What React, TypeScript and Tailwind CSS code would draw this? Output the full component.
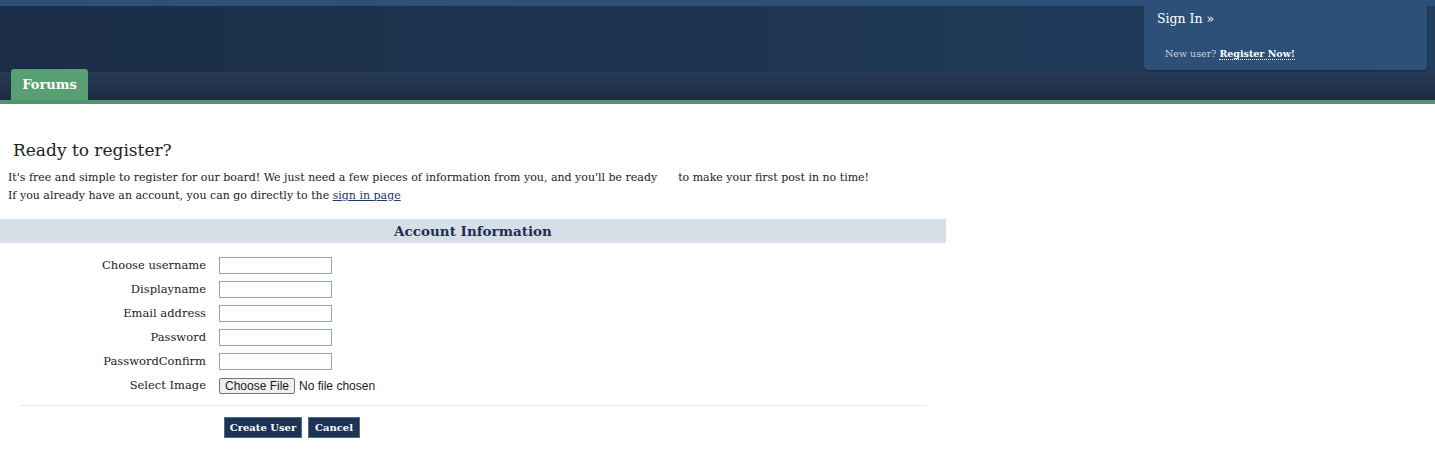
export default function App() {
  const fields = [
    "Choose username",
    "Displayname",
    "Email address",
    "Password",
    "PasswordConfirm",
  ];

  return (
    <div className="min-h-[450px] bg-white font-['DejaVu_Serif',serif] text-[#1b1b1b]">
      {/* header */}
      <header className="relative">
        <div className="h-[6px] bg-[#2d5078]" />
        <div className="h-[66px] bg-gradient-to-r from-[#1b2d46] to-[#203d5e]" />
        <nav className="h-[28px] bg-gradient-to-b from-[#283a55] to-[#1c2b42] px-[11px] flex items-end">
          <a className="flex h-[31px] w-[77px] items-center justify-center rounded-t-[3px] bg-[#58a073] text-[13px] font-bold text-white">
            Forums
          </a>
        </nav>
        <div className="h-[4px] bg-[#559270]" />

        <div className="absolute right-[8px] top-[6px] h-[64px] w-[283px] rounded-b-[4px] bg-[#2c5077] shadow-[0_1px_2px_rgba(0,0,0,0.3)]">
          <div className="pl-[13px] pt-[4px] text-[12.5px] text-white">Sign In »</div>
          <div className="pl-[21px] pt-[18px] text-[9.5px] text-[#c9d4e2]">
            New user?{" "}
            <a className="font-bold text-white border-b border-dotted border-white">Register Now!</a>
          </div>
        </div>
      </header>

      {/* content */}
      <main className="pt-[34px]">
        <h1 className="pl-[13px] text-[17px] leading-[24px] text-[#222]">Ready to register?</h1>
        <p className="pl-[8px] pt-[7px] text-[11px] leading-[18px] text-[#1b1b1b]">
          It's free and simple to register for our board! We just need a few pieces of information from you, and you'll be ready&nbsp;&nbsp;&nbsp;&nbsp;&nbsp; to make your first post in no time!
          <br />
          If you already have an account, you can go directly to the{" "}
          <a className="text-[#1d3a66] underline">sign in page</a>
        </p>

        <div className="mt-[14px] w-[946px]">
          <div className="flex h-[24px] items-center justify-center bg-[#d6dee7] text-[13.5px] font-bold text-[#1d3050]">
            Account Information
          </div>

          <div className="pt-[14px] flex flex-col gap-[7px]">
            {fields.map((f) => (
              <div key={f} className="flex items-center h-[17px]">
                <label className="w-[206px] text-right text-[11.5px] text-[#222]">{f}</label>
                <input
                  type={f.startsWith("Password") ? "password" : "text"}
                  className="ml-[13px] h-[17px] w-[113px] border border-[#8ea3bd] bg-white"
                />
              </div>
            ))}
            <div className="flex items-center h-[17px]">
              <label className="w-[206px] text-right text-[11.5px] text-[#222]">Select Image</label>
              <div className="ml-[13px] flex items-center font-['Liberation_Sans',sans-serif] text-[12px]">
                <span className="rounded-[2px] border border-[#767676] bg-[#efefef] px-[5px] leading-[14px]">
                  Choose File
                </span>
                <span className="ml-[4px]">No file chosen</span>
              </div>
            </div>
          </div>

          <div className="ml-[20px] mr-[21px] mt-[11px] h-px bg-[#e6e6e6]" />

          <div className="flex gap-[6px] pl-[224px] pt-[11px]">
            <button className="h-[21px] w-[78px] border border-[#4a6a90] bg-[#1d3353] text-[10px] font-bold text-white">
              Create User
            </button>
            <button className="h-[21px] w-[52px] border border-[#4a6a90] bg-[#1d3353] text-[10px] font-bold text-white">
              Cancel
            </button>
          </div>
        </div>
      </main>
    </div>
  );
}
